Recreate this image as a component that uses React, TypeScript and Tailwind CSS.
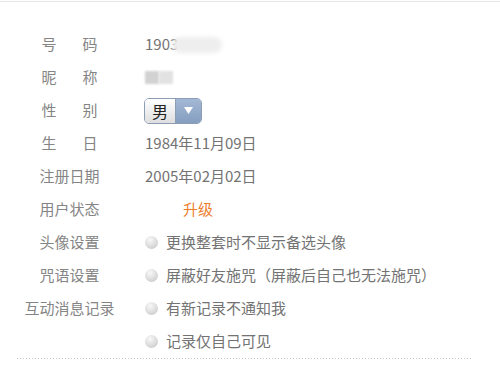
import React from 'react';

const font = { fontFamily: '"Noto Sans CJK SC", "Noto Sans", sans-serif' };

const Label: React.FC<{ text: string; spread?: boolean }> = ({ text, spread }) => (
  <div className="flex w-[139px] justify-center">
    {spread ? (
      <div className="flex w-[56px] justify-between">
        {text.split('').map((c, i) => (
          <span key={i}>{c}</span>
        ))}
      </div>
    ) : (
      <span>{text}</span>
    )}
  </div>
);

const Radio: React.FC<{ text: string }> = ({ text }) => (
  <div className="flex items-center">
    <span className="h-[13px] w-[13px] rounded-full bg-[radial-gradient(circle_at_40%_30%,#f8f8f8_0%,#dedede_50%,#c2c2c2_100%)]" />
    <span className="ml-[8px]">{text}</span>
  </div>
);

const Row: React.FC<{ label?: string; spread?: boolean; children: React.ReactNode }> = ({
  label,
  spread,
  children,
}) => (
  <div className="flex h-[33px] items-center">
    {label ? <Label text={label} spread={spread} /> : <div className="w-[139px]" />}
    <div className="ml-[6px] flex items-center text-[#737373]">{children}</div>
  </div>
);

export default function App() {
  return (
    <div className="h-[392px] w-[500px] bg-white text-[15px] text-[#858585]" style={font}>
      <div className="h-[2px] border-b border-[#e6e6e6]" />
      <div className="pt-[26px]">
        <Row label="号码" spread>
          <span>1903</span>
          <span className="-ml-[6px] h-[16px] w-[50px] rounded-full bg-[#eeeeee] blur-[2px]" />
        </Row>
        <Row label="昵称" spread>
          <span className="h-[13px] w-[14px] bg-[#d2d2d2] blur-[1px]" />
          <span className="h-[13px] w-[14px] bg-[#e2e2e2] blur-[1px]" />
        </Row>
        <Row label="性别" spread>
          <div className="-ml-[1px] flex h-[26px] w-[58px] overflow-hidden rounded-[5px] border border-[#8d9db6]">
            <div className="flex w-[31px] items-center justify-center border-r border-[#8d9db6] bg-[linear-gradient(#ffffff,#dedede)] text-[16px] text-[#222]">
              男
            </div>
            <div className="flex flex-1 items-center justify-center bg-[linear-gradient(#a3b8d4,#859ec0)]">
              <svg width="9" height="7" viewBox="0 0 9 7">
                <path d="M0 0 H9 L4.5 7 Z" fill="#fff" />
              </svg>
            </div>
          </div>
        </Row>
        <Row label="生日" spread>
          <span>1984年11月09日</span>
        </Row>
        <Row label="注册日期">
          <span>2005年02月02日</span>
        </Row>
        <Row label="用户状态">
          <span className="ml-[38px] text-[#ee7d2c]">升级</span>
        </Row>
        <Row label="头像设置">
          <Radio text="更换整套时不显示备选头像" />
        </Row>
        <Row label="咒语设置">
          <Radio text="屏蔽好友施咒（屏蔽后自己也无法施咒）" />
        </Row>
        <Row label="互动消息记录">
          <Radio text="有新记录不通知我" />
        </Row>
        <Row>
          <Radio text="记录仅自己可见" />
        </Row>
        <div className="ml-[17px] h-px w-[456px] bg-[repeating-linear-gradient(to_right,#c8c8c8_0_1px,transparent_1px_3px)]" />
      </div>
    </div>
  );
}
